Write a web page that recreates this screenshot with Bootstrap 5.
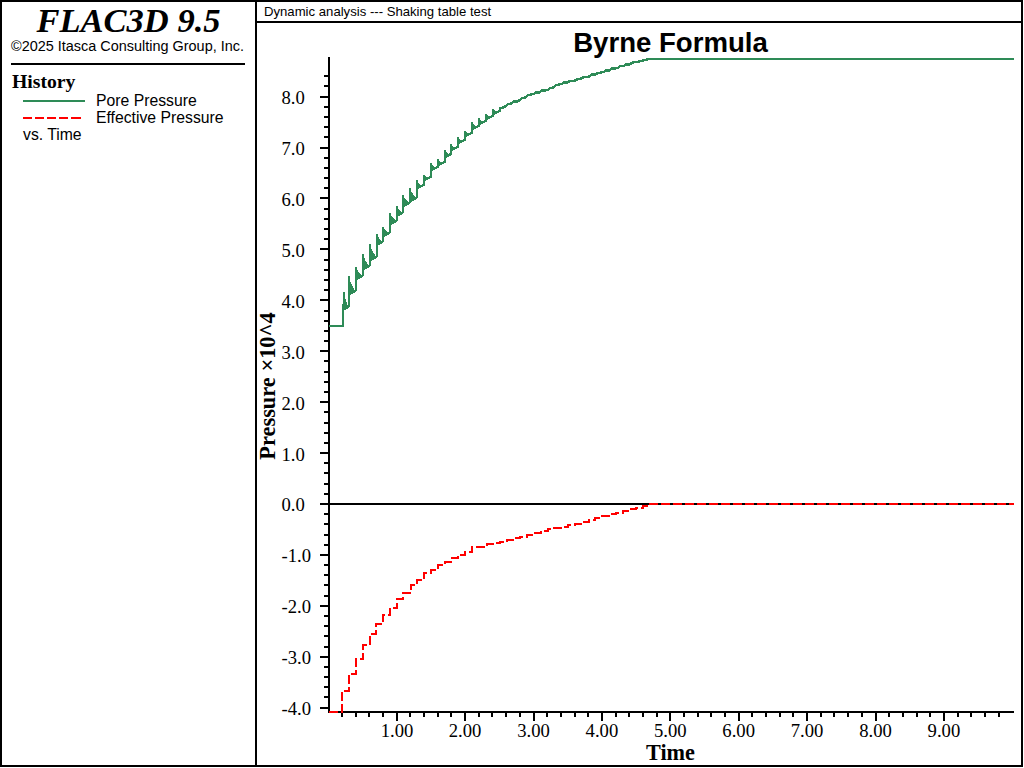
<!DOCTYPE html>
<html lang="en">
<head>
<meta charset="utf-8">
<title>FLAC3D 9.5</title>
<link href="https://cdn.jsdelivr.net/npm/bootstrap@5.3.0/dist/css/bootstrap.min.css" rel="stylesheet">
<style>
html,body{margin:0;padding:0;background:#fff;color:#000;}
.plot-frame{width:1023px;height:767px;border:2px solid #000;}
.side-panel{width:255px;flex:0 0 255px;border-right:2px solid #000;}
.brand-title{font:italic bold 34.5px/1 "Liberation Serif",serif;margin:0;padding-top:1px;height:30px;}
.brand-copy{font:14.45px/17px "Liberation Sans",sans-serif;padding:6px 2px 0 0;height:31px;white-space:nowrap;}
.side-rule{height:2px;background:#000;margin:0 10px 0 9px;}
.legend-head{font:bold 19.7px/20px "Liberation Serif",serif;margin:6px 0 0 10px;height:21px;}
.legend-row{font:15.75px/17px "Liberation Sans",sans-serif;height:17px;white-space:nowrap;margin-left:21px;}
.legend-swatch{width:73px;flex:0 0 73px;}
.main-panel{min-width:0;}
.sub-title{font:13.15px/19px "Liberation Sans",sans-serif;height:21px;border-bottom:2px solid #000;padding-left:7px;white-space:nowrap;}
.chart-svg{display:block;width:764px;height:742px;overflow:visible;}
.t-title{font:bold 27.6px "Liberation Sans",sans-serif;}
.t-tick{font:18.67px "Liberation Serif",serif;}
.t-time{font:bold 22.2px "Liberation Serif",serif;}
.t-press{font:bold 22.4px "Liberation Serif",serif;}
</style>
</head>
<body>
<div class="plot-frame d-flex">
  <aside class="side-panel">
    <h1 class="brand-title text-center">FLAC3D 9.5</h1>
    <div class="brand-copy text-center">©2025 Itasca Consulting Group, Inc.</div>
    <div class="side-rule"></div>
    <div class="legend-head">History</div>
    <div class="legend-row d-flex align-items-center">
      <svg class="legend-swatch" width="73" height="17" shape-rendering="crispEdges"><line x1="0" y1="9" x2="62" y2="9" stroke="#2e8b57" stroke-width="2"/></svg>
      <span>Pore Pressure</span>
    </div>
    <div class="legend-row d-flex align-items-center">
      <svg class="legend-swatch" width="73" height="17" shape-rendering="crispEdges"><path d="M0 9h9M12 9h9M24 9h9M36 9h9M48 9h10" stroke="#ff0000" stroke-width="2" fill="none"/></svg>
      <span>Effective Pressure</span>
    </div>
    <div class="legend-row">vs. Time</div>
  </aside>
  <main class="main-panel flex-grow-1 d-flex flex-column">
    <div class="sub-title">Dynamic analysis --- Shaking table test</div>
    <svg class="chart-svg" viewBox="257 23 764 742" xmlns="http://www.w3.org/2000/svg">
      <text class="t-title" x="670.5" y="52" text-anchor="middle">Byrne Formula</text>
      <g class="t-tick">
        <text x="281.5" y="104">8.0</text>
        <text x="281.5" y="155">7.0</text>
        <text x="281.5" y="206">6.0</text>
        <text x="281.5" y="257">5.0</text>
        <text x="281.5" y="308">4.0</text>
        <text x="281.5" y="358.5">3.0</text>
        <text x="281.5" y="409.5">2.0</text>
        <text x="281.5" y="460.5">1.0</text>
        <text x="281.5" y="511">0.0</text>
        <text x="281.5" y="562">-1.0</text>
        <text x="281.5" y="613">-2.0</text>
        <text x="281.5" y="664">-3.0</text>
        <text x="281.5" y="714.5">-4.0</text>
      </g>
      <g class="t-tick" text-anchor="middle">
        <text x="397" y="737">1.00</text>
        <text x="465.1" y="737">2.00</text>
        <text x="533.5" y="737">3.00</text>
        <text x="601.9" y="737">4.00</text>
        <text x="670.3" y="737">5.00</text>
        <text x="738.7" y="737">6.00</text>
        <text x="807.1" y="737">7.00</text>
        <text x="875.5" y="737">8.00</text>
        <text x="943.9" y="737">9.00</text>
      </g>
      <text class="t-time" x="670.5" y="760" text-anchor="middle">Time</text>
      <text class="t-press" transform="translate(275 386) rotate(-90)" text-anchor="middle">Pressure ×10^4</text>
      <g shape-rendering="crispEdges" fill="none">
        <path id="axes" stroke="#000" stroke-width="2"/>
        <polyline id="curve-green" stroke="#2e8b57" stroke-width="2.4" stroke-linejoin="bevel"/>
        <polyline id="curve-red" stroke="#ff0000" stroke-width="2.4" stroke-dasharray="9 3"/>
      </g>
    </svg>
  </main>
</div>
<script>
(function(){
  var d='M329 57V713M329 504H1014M328 712H1014';
  for(var i=-20;i<=42;i++){
    var y=Math.round(504-10.184*i), maj=i%5===0;
    if(y<60) continue;
    d+='M'+(maj?320:324)+' '+y+'H329';
  }
  for(var j=1;j<=49;j++){
    var x=Math.round(328.3+13.68*j), m=j%5===0;
    d+='M'+x+' 712V'+(m?721:717);
  }
  document.getElementById('axes').setAttribute('d',d);

  var spikes=[[342.5,292,307],[349,276,291],[355.5,267,276],[362.7,254,266],[369.5,244,257],[376.5,234,242],[383,227,233],[390,213,221],[396.6,206,213],[403.3,195,203],[410,188,198],[417,180,186],[424,175,178],[431,163,168],[438,159,163],[445,150,155],[451,144,148],[458,137,141],[465,131,134],[472,122,127],[479,118,122],[486,114,117],[493,109,112]];
  var g=[[329,326],[343,326],[343,305],[344,305]];
  spikes.forEach(function(s,n){
    var x=Math.round(s[0]), nx=n+1<spikes.length?Math.round(spikes[n+1][0]):x+7, w=nx-x, dec=n<11?w-1:Math.min(w-1,4);
    if(n===0){x=344;w=nx-x;dec=w-1;}
    for(var k=0;k<=dec;k++){
      var top=Math.round(s[1]+(s[2]-s[1])*Math.pow(k/dec,0.55)), lo=s[2]+Math.round((dec-k)*0.6);
      g.push([x+k,lo]);
      g.push([x+k,top]);
      g.push([x+k,lo]);
    }
    g.push([nx,s[2]-1]);
  });
  var ga=[[500,109],[507,105],[520,100],[533,94],[547,90],[560,84],[573,81],[587,77],[603,72],[620,67],[637,62],[650,59]];
  function interp(a,x){
    for(var q=0;q<a.length-1;q++){
      if(x<=a[q+1][0]) return a[q][1]+(a[q+1][1]-a[q][1])*(x-a[q][0])/(a[q+1][0]-a[q][0]);
    }
    return a[a.length-1][1];
  }
  for(var gx=500;gx<=650;gx+=2){
    var gy=Math.round(interp(ga,gx));
    var bump=((gx-500)%7<2&&gx<640)?1:0;
    g.push([gx,gy-bump]);
  }
  g.push([650,59]); g.push([660,59]); g.push([1014,59]);
  document.getElementById('curve-green').setAttribute('points',g.map(function(p){return p.join(',')}).join(' '));

  var rs=[[342,691],[349,674],[356,659],[363,645],[370,634],[376,624],[383,615],[390,608],[397,599],[403,593],[411,585],[417,580],[424,573],[431,570],[438,565],[445,562],[452,558],[458,555],[465,552],[472,547],[479,547],[487,544],[493,543],[500,542],[507,540],[514,538],[520,537]];
  var ra=[[520,537],[533,533],[540,531],[570,525],[602,516],[630,509],[650,505]];
  var r=[[329,712],[342,712]], ry=712;
  rs.forEach(function(p){ r.push([p[0],ry]); r.push([p[0],p[1]]); ry=p[1]; });
  for(var u=527;u<650;u+=6.84){
    var rx=Math.round(u), yy=Math.round(interp(ra,u));
    r.push([rx,ry]); r.push([rx,yy]); ry=yy;
  }
  r.push([650,ry]); r.push([650,504]); r.push([1014,504]);
  document.getElementById('curve-red').setAttribute('points',r.map(function(p){return p.join(',')}).join(' '));
})();
</script>
<script src="https://cdn.jsdelivr.net/npm/bootstrap@5.3.0/dist/js/bootstrap.bundle.min.js"></script>
</body>
</html>
